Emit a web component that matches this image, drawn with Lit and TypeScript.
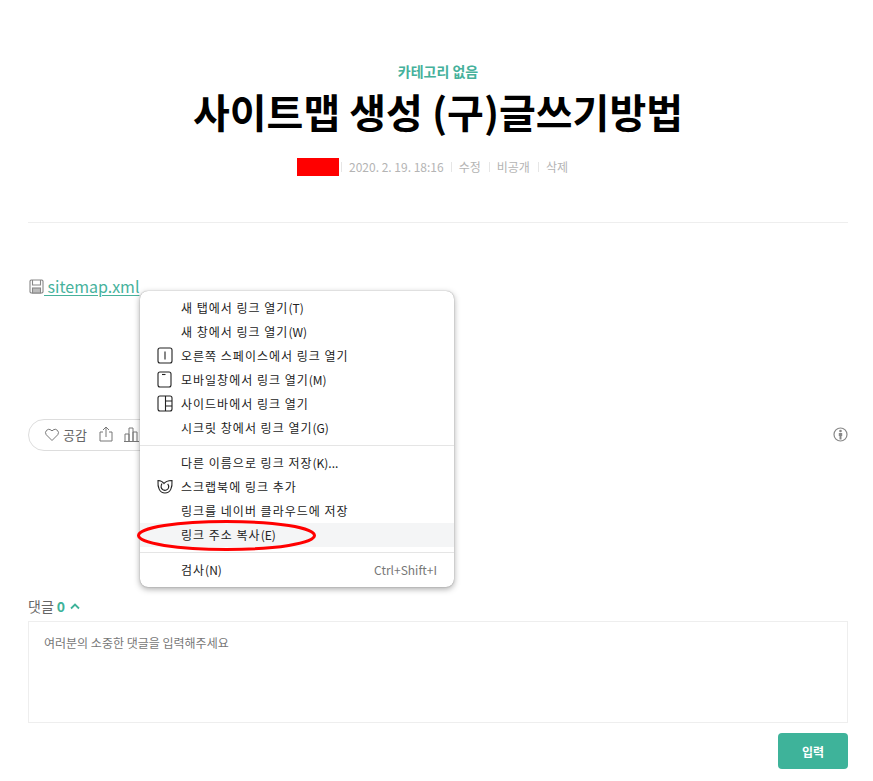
import { LitElement, html, css, svg } from "lit";
import { customElement } from "lit/decorators.js";

const iconSpace = svg`<rect x="1" y="1" width="14" height="15" rx="2" fill="none" stroke="#222" stroke-width="1.1"/><path d="M8 4.500v8" stroke="#222" stroke-width="1.100"/>`;
const iconMobile = svg`<rect x="1" y="1" width="13" height="15" rx="2" fill="none" stroke="#222" stroke-width="1.1"/><path d="M5 3.500h3.500" stroke="#222" stroke-width="1.100"/>`;
const iconSide = svg`<rect x="1" y="1" width="14" height="15" rx="2" fill="none" stroke="#222" stroke-width="1.1"/><path d="M8.500 1v15M8.500 6H15M8.500 11H15" stroke="#222" stroke-width="1.100"/>`;
const iconScrap = svg`<path d="M1 2.500c2.800.2 4.800 1.200 6 3 1.200-1.800 4-2.800 8-3 .5 7-1.500 12.500-7 12.500S.5 9.500 1 2.500Z" fill="none" stroke="#222" stroke-width="1.100"/><path d="M5 5.500C3.600 8 4 10.500 6 11.800c2.200 1.200 4.800.2 5.500-2 .5-1.600 0-3-.8-4" fill="none" stroke="#222" stroke-width="1.100"/>`;

type Item = { label: string; key?: string; icon?: unknown; hint?: string; hover?: boolean };
const groups: Item[][] = [
  [
    { label: "새 탭에서 링크 열기", key: "(T)" },
    { label: "새 창에서 링크 열기", key: "(W)" },
    { label: "오른쪽 스페이스에서 링크 열기", icon: iconSpace },
    { label: "모바일창에서 링크 열기", key: "(M)", icon: iconMobile },
    { label: "사이드바에서 링크 열기", icon: iconSide },
    { label: "시크릿 창에서 링크 열기", key: "(G)" },
  ],
  [
    { label: "다른 이름으로 링크 저장", key: "(K)..." },
    { label: "스크랩북에 링크 추가", icon: iconScrap },
    { label: "링크를 네이버 클라우드에 저장" },
    { label: "링크 주소 복사", key: "(E)", hover: true },
  ],
  [{ label: "검사", key: "(N)", hint: "Ctrl+Shift+I" }],
];

@customElement("app-root")
export class AppRoot extends LitElement {
  static styles = css`
    :host { display: block; position: relative; width: 873px; height: 781px; overflow: hidden; background: #fff; font-family: "Noto Sans CJK KR", "Noto Sans", sans-serif; }
    .page { padding: 61px 25px 0 28px; display: flex; flex-direction: column; }
    .head { display: flex; flex-direction: column; align-items: center; height: 161px; border-bottom: 1px solid #eee; }
    .cat { font-size: 14px; font-weight: 700; line-height: 20px; color: #45b19b; }
    .title { margin: 5px 0 0; font-size: 40px; line-height: 50px; font-weight: 700; color: #000; }
    .meta { margin-top: 22px; padding-right: 11px; display: flex; align-items: center; font-size: 12px; line-height: 18px; color: #b4b4b4; }
    .redact { width: 42px; height: 18px; background: #f00; margin-right: -6px; }
    .date { margin-right: -1px; }
    .sep { width: 1px; height: 10px; background: #e6e6e6; margin: 0 7px 0 8px; }
    .file { margin-top: 50px; height: 26px; display: flex; align-items: center; font-size: 16px; color: #46b29c; }
    .file a { color: inherit; text-decoration: underline; text-underline-offset: 2px; white-space: pre; display: inline-flex; align-items: center; }
    .file svg { margin-left: 1px; }
    .actions { margin-top: 120px; height: 32px; display: flex; justify-content: space-between; align-items: center; }
    .pill { box-sizing: border-box; width: 200px; height: 32px; border: 1px solid #ddd; border-radius: 16px; display: flex; align-items: center; padding: 0 0 2px 15px; font-size: 13px; color: #666; }
    .like { display: flex; align-items: center; gap: 3px; margin-right: 12px; }
    .share { margin-right: 11px; }
    .info { display: flex; margin-bottom: 2px; }
    .cmt { margin-top: 146px; margin-bottom: 6px; height: 18px; display: flex; align-items: center; gap: 3px; font-size: 14px; color: #666; }
    .cmt b { color: #3eb39a; font-size: 14px; }
    .cmt svg { margin-left: 2px; }
    .box { box-sizing: border-box; height: 102px; border: 1px solid #eee; padding: 12px 15px; font-size: 12px; line-height: 18px; color: #777; }
    .foot { margin-top: 10px; display: flex; justify-content: flex-end; }
    .btn { width: 70px; height: 36px; border-radius: 4px; background: #3eb39a; color: #fff; font-size: 12px; font-weight: 700; display: flex; align-items: center; justify-content: center; }
    .menu { position: absolute; left: 140px; top: 291px; box-sizing: border-box; width: 314px; height: 296px; padding: 5px 0; background: #fff; border-radius: 8px; box-shadow: 0 0 1px rgba(0,0,0,.45), 0 2px 6px rgba(0,0,0,.35); font-size: 12px; color: #222; }
    .item { box-sizing: border-box; height: 24px; display: flex; align-items: center; padding: 0 17px 2px 41px; position: relative; letter-spacing: 1px; }
    .item.hover { background: #f4f5f6; }
    .item svg { position: absolute; left: 17px; top: 3px; }
    .key { letter-spacing: 0; }
    .hint { margin-left: auto; color: #777; letter-spacing: 0; }
    hr { margin: 5px 0; border: 0; border-top: 1px solid #e5e5e5; height: 0; }
    .ring { position: absolute; left: 136px; top: 519px; }
  `;

  render() {
    return html`
      <div class="page">
        <header class="head">
          <div class="cat">카테고리 없음</div>
          <h1 class="title">사이트맵 생성 (구)글쓰기방법</h1>
          <div class="meta">
            <span class="redact"></span><span class="sep"></span>
            <span class="date">2020. 2. 19. 18:16</span><span class="sep"></span>
            <span>수정</span><span class="sep"></span>
            <span>비공개</span><span class="sep"></span>
            <span>삭제</span>
          </div>
        </header>
        <div class="file">
          <a><svg width="15" height="15" viewBox="0 0 15 15" fill="none" stroke="#888" stroke-width="1.1">
              <path d="M2 1h11l1 1v11l-1 1H2l-1-1V2z"/><path d="M3.500 1v5h8V1"/><rect x="3.500" y="9" width="8" height="5" fill="#bbb"/>
            </svg><span> sitemap.xml</span></a>
        </div>
        <div class="actions">
          <div class="pill">
            <span class="like">
              <svg width="16" height="15" viewBox="0 0 16 15" fill="none" stroke="#777" stroke-width="1"><path d="M8 13.500 2.200 7.700A3.400 3.400 0 0 1 7 3l1 1 1-1a3.400 3.400 0 0 1 4.800 4.700z"/></svg>
              공감
            </span>
            <svg class="share" width="14" height="16" viewBox="0 0 14 16" fill="none" stroke="#777" stroke-width="1"><path d="M4 6H1v9h12V6h-3M7 11V1M4 4l3-3 3 3"/></svg>
            <svg width="15" height="15" viewBox="0 0 15 15" fill="none" stroke="#777" stroke-width="1"><path d="M1 14V7h4v7M5 14V1h4v13M9 14V5h4v9M0 14.500h15"/></svg>
          </div>
          <span class="info">
            <svg width="15" height="15" viewBox="0 0 15 15"><circle cx="7.500" cy="7.500" r="6.500" fill="none" stroke="#888" stroke-width="1.200"/><circle cx="7.500" cy="4" r="1.300" fill="#888"/><path d="M5.800 6h3.400v3H8.500v3.500h-2V9h-.7z" fill="#888"/></svg>
          </span>
        </div>
        <div class="cmt">댓글 <b>0</b>
          <svg width="10" height="7" viewBox="0 0 10 7" fill="none" stroke="#3eb39a" stroke-width="1.800"><path d="M1 5.500 5 1.500l4 4"/></svg>
        </div>
        <div class="box">여러분의 소중한 댓글을 입력해주세요</div>
        <div class="foot"><div class="btn">입력</div></div>
      </div>
      <div class="menu">
        ${groups.map((g, i) => html`
          ${i ? html`<hr />` : ""}
          ${g.map((it) => html`
            <div class="item ${it.hover ? "hover" : ""}">
              ${it.icon ? html`<svg width="16" height="17" viewBox="0 0 16 17">${it.icon}</svg>` : ""}
              <span>${it.label}</span>${it.key ? html`<span class="key">${it.key}</span>` : ""}
              ${it.hint ? html`<span class="hint">${it.hint}</span>` : ""}
            </div>`)}
        `)}
      </div>
      <svg class="ring" width="182" height="34" viewBox="0 0 182 34"><ellipse cx="90.500" cy="16.500" rx="88" ry="14" fill="none" stroke="#f00" stroke-width="3"/></svg>
    `;
  }
}
